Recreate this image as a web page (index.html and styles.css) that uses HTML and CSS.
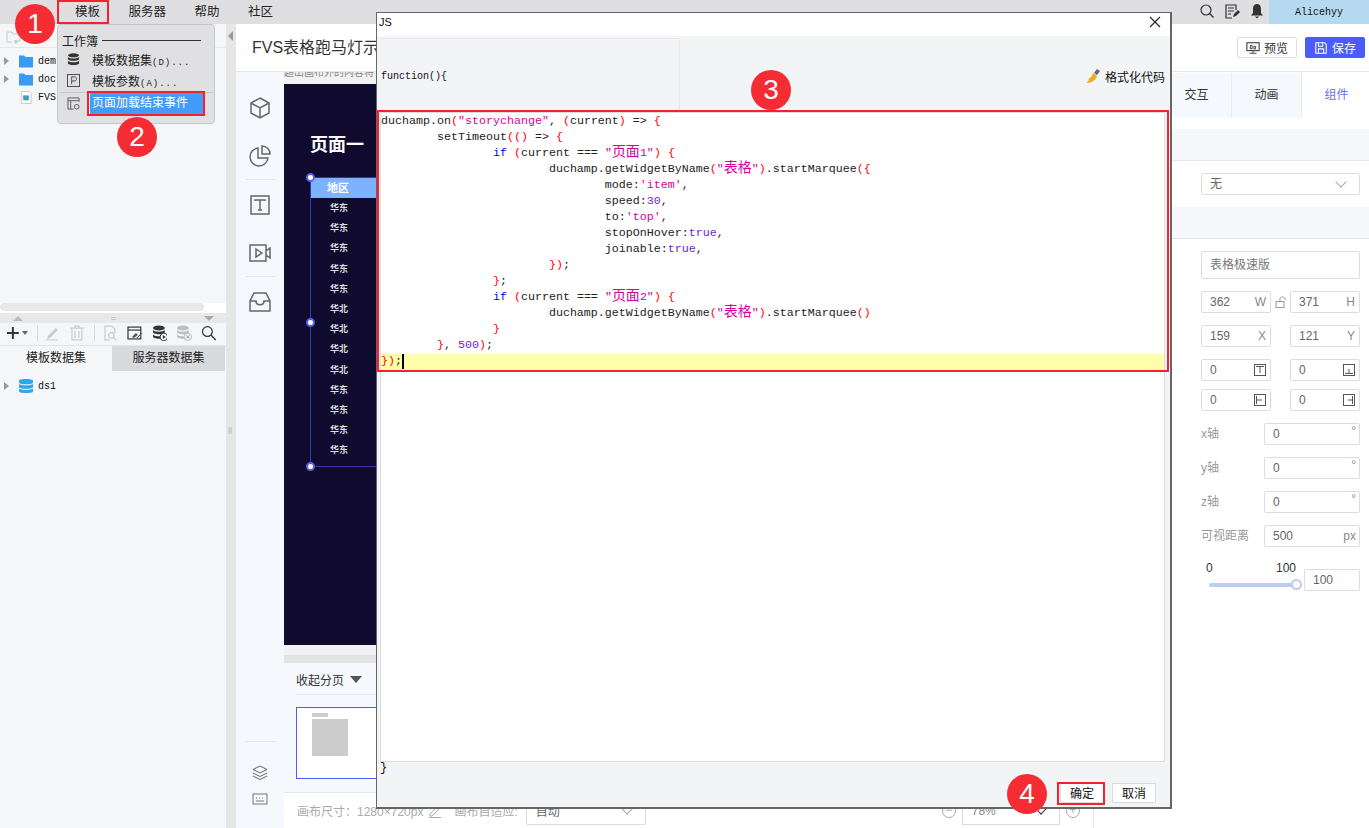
FILE: index.html
```html
<!DOCTYPE html>
<html lang="zh-CN">
<head>
    <meta charset="UTF-8">
    <title>FVS表格跑马灯示例</title>
    <link rel="stylesheet" href="styles.css">
</head>
<body>
    <div class="topbar">
        <div class="top-menu">
            <span class="top-item">模板</span>
            <span class="top-item">服务器</span>
            <span class="top-item">帮助</span>
            <span class="top-item">社区</span>
        </div>
        <div class="top-right">
            <svg class="top-icon" viewBox="0 0 16 16"><circle cx="7" cy="7" r="5" fill="none" stroke="#333" stroke-width="1.2"/><path d="M10.6 10.6L14.5 14.5" stroke="#333" stroke-width="1.4"/></svg>
            <svg class="top-icon" viewBox="0 0 16 16"><path d="M12 7V2H2v13h6" fill="none" stroke="#333" stroke-width="1.2"/><path d="M4 5h6M4 8h6M4 11h3" stroke="#333"/><path d="M9 14l1-3 4-4 2 2-4 4z" fill="#333"/></svg>
            <svg class="top-icon" viewBox="0 0 16 16"><path d="M8 1c-3 0-4 2.500-4 5v4l-2 2.500h12L12 10V6c0-2.500-1-5-4-5z" fill="#333"/><path d="M6 13.500h4L8 15.500z" fill="#333"/></svg>
            <div class="user-box sim">Alicehyy</div>
        </div>
    </div>

    <div class="workspace">
        <div class="left-panel">
            <div class="file-tools">
                <svg class="small-icon" viewBox="0 0 16 16"><path d="M1 3h5l1 2h7v7H8M1 3v10h5" fill="none" stroke="#c4c6ca"/><path d="M10 11v4M8 13h4" stroke="#c4c6ca"/></svg>
            </div>
            <div class="file-tree">
                <div class="tree-row"><span class="tree-arrow"></span><svg class="tree-icon" viewBox="0 0 14 12"><path d="M0 0h5l1.500 1.500H14V12H0z" fill="#3a9bf5"/></svg><span class="sim">dem</span></div>
                <div class="tree-row"><span class="tree-arrow"></span><svg class="tree-icon" viewBox="0 0 14 12"><path d="M0 0h5l1.500 1.500H14V12H0z" fill="#3a9bf5"/></svg><span class="sim">doc</span></div>
                <div class="tree-row"><span class="tree-arrow hidden"></span><svg class="tree-icon" viewBox="0 0 14 14"><path d="M2 .5h8l2.500 2.500v10.500H2z" fill="#fff" stroke="#c8c8c8"/><rect x="4" y="5" width="6" height="5" fill="#4c9f8d"/><rect x="4" y="5" width="6" height="2" fill="#3a9bf5"/></svg><span class="sim">FVS</span></div>
            </div>
            <div class="hscroll"><div class="hscroll-thumb"></div></div>
            <div class="split-bar">
                <span class="tri-up"></span>
                <span class="grip">=</span>
                <span class="tri-down"></span>
            </div>
            <div class="data-tools">
                <svg class="plus-icon" viewBox="0 0 16 16"><path d="M8 2v12M2 8h12" stroke="#333" stroke-width="2"/></svg>
                <span class="caret"></span>
                <span class="tool-sep"></span>
                <svg class="tool-icon" viewBox="0 0 16 16"><path d="M3 11l8-8 2 2-8 8-3 1z" fill="#c9cacc"/><path d="M1 15h12" stroke="#c9cacc"/></svg>
                <svg class="tool-icon" viewBox="0 0 16 16"><path d="M3 4v11h10V4M1 3h14M6 3V1h4v2M6 6v7M10 6v7" fill="none" stroke="#c9cacc" stroke-width="1.200"/></svg>
                <span class="tool-sep"></span>
                <svg class="tool-icon" viewBox="0 0 16 16"><path d="M8 15H3V1h7l3 3v4" fill="none" stroke="#c9cacc" stroke-width="1.200"/><circle cx="9.500" cy="10.500" r="2.800" fill="none" stroke="#c9cacc" stroke-width="1.200"/><path d="M11.500 12.500l3 3" stroke="#c9cacc" stroke-width="1.200"/></svg>
                <svg class="tool-icon" viewBox="0 0 16 16"><rect x="1" y="2" width="13" height="12" fill="none" stroke="#333" stroke-width="1.200"/><path d="M1 5h13" stroke="#333" stroke-width="1.200"/><path d="M5 12l4-4 2 2-4 3z" fill="#555"/><path d="M10 13l5-5" stroke="#333"/></svg>
                <svg class="tool-icon" viewBox="0 0 16 16"><ellipse cx="7" cy="3" rx="6" ry="2.500" fill="#333"/><path d="M1 4.500c0 3 12 3 12 0V7c0 3-12 3-12 0zM1 9c0 3 12 3 12 0v2.500c0 3-12 3-12 0z" fill="#333"/><circle cx="12" cy="12" r="3.800" fill="#fff" stroke="#333"/><path d="M11 10v4l3-2z" fill="#333"/></svg>
                <svg class="tool-icon" viewBox="0 0 16 16"><ellipse cx="7" cy="3" rx="6" ry="2.500" fill="#bdbec0"/><path d="M1 4.500c0 3 12 3 12 0V7c0 3-12 3-12 0zM1 9c0 3 12 3 12 0v2.500c0 3-12 3-12 0z" fill="#bdbec0"/><circle cx="12" cy="12" r="3.800" fill="#f0f0f0" stroke="#bdbec0"/><path d="M10.500 10.500l3 3M13.500 10.500l-3 3" stroke="#999"/></svg>
                <svg class="tool-icon" viewBox="0 0 16 16"><circle cx="6.500" cy="6.500" r="5" fill="none" stroke="#333" stroke-width="1.200"/><path d="M10 10l5 5" stroke="#333" stroke-width="1.400"/></svg>
            </div>
            <div class="data-tabs">
                <div class="data-tab">模板数据集</div>
                <div class="data-tab data-tab-off">服务器数据集</div>
            </div>
            <div class="tree-row ds-row">
                <span class="tree-arrow"></span>
                <svg class="tree-icon db-icon" viewBox="0 0 14 16"><path d="M0 2.500C0 .5 14 .5 14 2.500v11c0 2-14 2-14 0z" fill="#2ea6ea"/><path d="M0 5.500c2 1.800 12 1.800 14 0M0 10c2 1.800 12 1.800 14 0" fill="none" stroke="#fff"/></svg>
                <span class="sim">ds1</span>
            </div>
        </div>

        <div class="splitter">
            <span class="collapse-tri"></span>
            <span class="split-grip">||</span>
        </div>

        <div class="center">
            <div class="center-head">FVS表格跑马灯示</div>
            <div class="center-body">
                <div class="side-tools">
                    <svg class="side-icon" viewBox="0 0 24 24"><path d="M12 2l9 5v10l-9 5-9-5V7zM3 7l9 5 9-5M12 12v10" fill="none" stroke="#666" stroke-width="1.500"/></svg>
                    <svg class="side-icon" viewBox="0 0 24 24"><path d="M10 4a9 9 0 1 0 10 10H10z" fill="none" stroke="#666" stroke-width="1.500"/><path d="M14 2a8 8 0 0 1 8 8h-8z" fill="none" stroke="#666" stroke-width="1.500"/></svg>
                    <div class="side-sep"></div>
                    <svg class="side-icon" viewBox="0 0 24 24"><path d="M3 6V3h18v3M3 18v3h18v-3M3 6v12M21 6v12" fill="none" stroke="#666" stroke-width="1.500"/><path d="M7 8V7h10v1M12 7v10M10 17h4" fill="none" stroke="#666" stroke-width="1.500"/></svg>
                    <svg class="side-icon" viewBox="0 0 24 24"><path d="M2 4h16v16H2zM18 10l4-3v10l-4-3" fill="none" stroke="#666" stroke-width="1.500"/><path d="M8 8l6 4-6 4z" fill="none" stroke="#666" stroke-width="1.500"/></svg>
                    <div class="side-sep"></div>
                    <svg class="side-icon" viewBox="0 0 24 24"><path d="M6 3h12l4 8v10H2V11zM2 11h6c0 5 8 5 8 0h6" fill="none" stroke="#666" stroke-width="1.500"/></svg>
                    <div class="side-spacer"></div>
                    <div class="side-sep"></div>
                    <svg class="side-small" viewBox="0 0 16 16"><path d="M8 1l7 3.500-7 3.500-7-3.500zM1 8l7 3.500L15 8M1 11l7 3.500 7-3.500" fill="none" stroke="#666"/></svg>
                    <svg class="side-small" viewBox="0 0 16 16"><rect x="1" y="3" width="14" height="10" fill="none" stroke="#777"/><path d="M4 7h1M7 7h1M10 7h1M4 10h8" stroke="#777"/></svg>
                </div>
                <div class="stage">
                    <div class="stage-note">超出画布外的内容将</div>
                    <div class="canvas">
                        <div class="page-title">页面一</div>
                        <div class="marquee-table">
                            <div class="table-head">地区</div>
                            <div class="table-cell">华东</div>
                            <div class="table-cell">华东</div>
                            <div class="table-cell">华东</div>
                            <div class="table-cell">华东</div>
                            <div class="table-cell">华东</div>
                            <div class="table-cell">华北</div>
                            <div class="table-cell">华北</div>
                            <div class="table-cell">华北</div>
                            <div class="table-cell">华北</div>
                            <div class="table-cell">华东</div>
                            <div class="table-cell">华东</div>
                            <div class="table-cell">华东</div>
                            <div class="table-cell">华东</div>
                            <span class="handle handle-top"></span>
                            <span class="handle handle-mid"></span>
                            <span class="handle handle-bottom"></span>
                        </div>
                    </div>
                    <div class="stage-gap"></div>
                    <div class="stage-scroll"></div>
                    <div class="pager">
                        <div class="pager-head">收起分页 <span class="pager-caret"></span></div>
                        <div class="thumb">
                            <div class="thumb-title"></div>
                            <div class="thumb-block"></div>
                        </div>
                    </div>
                    <div class="status-bar">
                        <span>画布尺寸：1280×720px</span>
                        <svg class="status-pen" viewBox="0 0 14 14"><path d="M2 10l7-7 2 2-7 7H2zM1 13.500h12" fill="none" stroke="#aaa"/></svg>
                        <span class="status-label">画布自适应:</span>
                        <div class="status-select"><span>自动</span><span class="chevron"></span></div>
                        <span class="status-minus">−</span>
                        <div class="zoom-select"><span>78%</span><span class="chevron chevron-dark"></span></div>
                        <span class="status-minus">+</span>
                        <span class="status-line"></span>
                    </div>
                </div>
            </div>
        </div>

        <div class="right-panel">
            <div class="right-head">
                <button class="btn-preview"><svg class="btn-icon" viewBox="0 0 16 16"><rect x="1" y="2" width="14" height="9" fill="none" stroke="#333" stroke-width="1.200"/><path d="M8 11v3M4 14h8M5 5h2v4H5zM9 6h2v3H9z" stroke="#333" fill="none"/></svg>预览</button>
                <button class="btn-save"><svg class="btn-icon" viewBox="0 0 16 16"><path d="M2 2h10l2 2v10H2zM5 2v4h5V2M5 14v-5h6v5" fill="none" stroke="#fff" stroke-width="1.200"/></svg>保存</button>
            </div>
            <div class="right-tabs">
                <div class="right-tab">交互</div>
                <div class="right-tab">动画</div>
                <div class="right-tab right-tab-on">组件</div>
            </div>
            <div class="band band-first"></div>
            <div class="select-box"><span class="select-text">无</span><span class="chevron"></span></div>
            <div class="band"></div>
            <div class="name-input">表格极速版</div>
            <div class="field-row field-row-first">
                <div class="field"><span>362</span><span class="unit">W</span></div>
                <svg class="lock" viewBox="0 0 12 12"><rect x="1" y="5.500" width="8" height="6" fill="none" stroke="#999"/><path d="M5 5V2.500c0-2 5-2 5 0V4" fill="none" stroke="#999"/></svg>
                <div class="field"><span>371</span><span class="unit">H</span></div>
            </div>
            <div class="field-row">
                <div class="field"><span>159</span><span class="unit">X</span></div>
                <div class="field"><span>121</span><span class="unit">Y</span></div>
            </div>
            <div class="field-row">
                <div class="field"><span>0</span><svg class="edge" viewBox="0 0 12 12"><rect x=".5" y=".5" width="11" height="11" fill="none" stroke="#555"/><path d="M2 2.500h8M6 2.500V9" stroke="#555"/></svg></div>
                <div class="field"><span>0</span><svg class="edge" viewBox="0 0 12 12"><rect x=".5" y=".5" width="11" height="11" fill="none" stroke="#555"/><path d="M2 9.500h8M6 9.500V5" stroke="#555"/></svg></div>
            </div>
            <div class="field-row field-row-tight">
                <div class="field"><span>0</span><svg class="edge" viewBox="0 0 12 12"><rect x=".5" y=".5" width="11" height="11" fill="none" stroke="#555"/><path d="M2.500 2v8M2.500 6H8" stroke="#555"/></svg></div>
                <div class="field"><span>0</span><svg class="edge" viewBox="0 0 12 12"><rect x=".5" y=".5" width="11" height="11" fill="none" stroke="#555"/><path d="M9.500 2v8M9.500 6H5" stroke="#555"/></svg></div>
            </div>
            <div class="axis-row"><span class="axis-label">x轴</span><div class="axis-field"><span>0</span><span class="deg">°</span></div></div>
            <div class="axis-row"><span class="axis-label">y轴</span><div class="axis-field"><span>0</span><span class="deg">°</span></div></div>
            <div class="axis-row"><span class="axis-label">z轴</span><div class="axis-field"><span>0</span><span class="deg">°</span></div></div>
            <div class="axis-row"><span class="axis-label">可视距离</span><div class="axis-field"><span>500</span><span class="unit">px</span></div></div>
            <div class="slider-row">
                <div class="slider">
                    <div class="slider-labels"><span>0</span><span>100</span></div>
                    <div class="slider-track"><span class="slider-knob"></span></div>
                </div>
                <div class="slider-input">100</div>
            </div>
        </div>
    </div>

    <!-- template menu -->
    <div class="menu">
        <div class="menu-label"><span>工作簿</span><span class="menu-rule"></span></div>
        <div class="menu-row">
            <svg class="menu-icon" viewBox="0 0 14 14"><ellipse cx="7" cy="2.500" rx="6" ry="2.200" fill="#333"/><path d="M1 4c0 2.500 12 2.500 12 0v2.500c0 2.500-12 2.500-12 0zM1 8.200c0 2.500 12 2.500 12 0v2.800c0 2.500-12 2.500-12 0z" fill="#333"/></svg>
            <span>模板数据集<span class="menu-key">(D)...</span></span>
        </div>
        <div class="menu-row">
            <svg class="menu-icon" viewBox="0 0 14 14"><rect x=".5" y=".5" width="13" height="13" fill="none" stroke="#444"/><path d="M5 11V3h3c3 0 3 4.500 0 4.500H5" fill="none" stroke="#444"/></svg>
            <span>模板参数<span class="menu-key">(A)...</span></span>
        </div>
        <div class="menu-sep"></div>
        <div class="menu-row menu-row-on">
            <svg class="menu-icon" viewBox="0 0 14 14"><path d="M13 5V1H1v12h6M1 4h12M4 4v9" fill="none" stroke="#555"/><circle cx="10.500" cy="10.500" r="2.500" fill="none" stroke="#555"/></svg>
            <span class="menu-active">页面加载结束事件</span>
        </div>
    </div>

    <!-- JS editor dialog -->
    <div class="dialog">
        <div class="dialog-title">
            <span>JS</span>
            <svg class="dialog-close" viewBox="0 0 12 12"><path d="M1 1l10 10M11 1L1 11" stroke="#222" stroke-width="1.100"/></svg>
        </div>
        <div class="dialog-head">
            <div class="func-cell sim">function(){</div>
            <div class="format-btn">
                <svg class="broom" viewBox="0 0 16 16"><path d="M9 5l3-4 3 2-3 4z" fill="#666"/><path d="M8 5l4 3c-1 4-5 7-11 7 3-2 3-3 3-5 2 0 3-2 4-5z" fill="#f2a91e"/></svg>
                格式化代码
            </div>
        </div>
        <div class="editor">
            <div class="code-line">duchamp.on<b>(</b><i>"storychange"</i>, <b>(</b>current<b>)</b> => <b>{</b></div>
            <div class="code-line">	setTimeout<b>(()</b> => <b>{</b></div>
            <div class="code-line">		<u>if</u> <b>(</b>current === <i>"<span class="cjk">页面</span>1"</i><b>)</b> <b>{</b></div>
            <div class="code-line">			duchamp.getWidgetByName<b>(</b><i>"<span class="cjk">表格</span>"</i><b>)</b>.startMarquee<b>({</b></div>
            <div class="code-line">				mode:<i>'item'</i>,</div>
            <div class="code-line">				speed:<em>30</em>,</div>
            <div class="code-line">				to:<i>'top'</i>,</div>
            <div class="code-line">				stopOnHover:<em>true</em>,</div>
            <div class="code-line">				joinable:<em>true</em>,</div>
            <div class="code-line">			<b>})</b>;</div>
            <div class="code-line">		<b>}</b>;</div>
            <div class="code-line">		<u>if</u> <b>(</b>current === <i>"<span class="cjk">页面</span>2"</i><b>)</b> <b>{</b></div>
            <div class="code-line">			duchamp.getWidgetByName<b>(</b><i>"<span class="cjk">表格</span>"</i><b>)</b>.startMarquee<b>()</b></div>
            <div class="code-line">		<b>}</b></div>
            <div class="code-line">	<b>}</b>, <em>500</em><b>)</b>;</div>
            <div class="code-line code-line-on"><b>})</b>;<span class="text-caret"></span></div>
        </div>
        <div class="code-end">}</div>
        <div class="dialog-foot">
            <button class="btn-dialog">确定</button>
            <button class="btn-dialog">取消</button>
        </div>
    </div>

    <!-- tutorial marks on top of the screenshot -->
    <div class="mark mark-menu"></div>
    <div class="mark mark-item"></div>
    <div class="mark mark-code"></div>
    <div class="mark mark-ok"></div>
    <div class="step step-1">1</div>
    <div class="step step-2">2</div>
    <div class="step step-3">3</div>
    <div class="step step-4">4</div>
</body>
</html>
```

FILE: styles.css
```css
* {
    margin: 0;
    padding: 0;
    box-sizing: border-box;
}

body {
    width: 1369px;
    height: 828px;
    overflow: hidden;
    position: relative;
    font-family: "Liberation Sans", "Noto Sans CJK SC", sans-serif;
    font-size: 12px;
    color: #333;
    background: #fff;
}

.sim {
    font-family: "Liberation Mono", "Noto Sans CJK SC", monospace;
    font-size: 10px;
    color: #111;
}

/* top bar */
.topbar {
    height: 24px;
    background: #dfdfe1;
    display: flex;
    justify-content: space-between;
}

.top-menu {
    display: flex;
    padding: 0 0 3px 75px;
    gap: 28.5px;
    align-items: center;
    color: #222;
    font-size: 12.5px;
}

.top-right {
    display: flex;
    align-items: center;
}

.top-icon {
    width: 16px;
    height: 16px;
    margin: -2px 9px 0 0;
}

.top-icon:nth-child(3) {
    margin-right: 4px;
}

.user-box {
    width: 100px;
    height: 24px;
    background: #b5d9f0;
    text-align: center;
    line-height: 25px;
}

.workspace {
    display: flex;
    height: 804px;
}

/* left panel */
.left-panel {
    width: 226px;
    background: #f5f6f8;
}

.file-tools {
    height: 24px;
    padding: 5px 6px;
    border-bottom: 1px solid #e6e7ea;
}

.small-icon {
    width: 16px;
    height: 16px;
    display: block;
}

.file-tree {
    height: 254px;
    padding-top: 4px;
}

.tree-row {
    height: 18px;
    display: flex;
    align-items: center;
    white-space: nowrap;
    overflow: hidden;
}

.tree-arrow {
    width: 0;
    height: 0;
    margin: 0 10px 0 4px;
    border-left: 5px solid #999;
    border-top: 4px solid transparent;
    border-bottom: 4px solid transparent;
}

.hidden {
    visibility: hidden;
}

.tree-icon {
    width: 14px;
    height: 13px;
    margin-right: 5px;
}

.db-icon {
    height: 16px;
}

.hscroll {
    height: 10px;
    background: #fff;
}

.hscroll-thumb {
    width: 204px;
    height: 8px;
    margin-top: 1px;
    background: #e8e8e8;
    border-radius: 4px;
}

.split-bar {
    height: 10px;
    background: #e8e8e8;
    display: flex;
    justify-content: space-between;
    align-items: center;
    padding: 0 12px 0 13px;
    color: #aaa;
    font-size: 9px;
}

.tri-up,
.tri-down {
    width: 0;
    height: 0;
    border-left: 5px solid transparent;
    border-right: 5px solid transparent;
}

.tri-up {
    border-bottom: 5px solid #bbb;
}

.tri-down {
    border-top: 5px solid #aaa;
}

.data-tools {
    height: 23px;
    display: flex;
    align-items: center;
    padding: 0 0 2px 5px;
    border-bottom: 1px solid #e3e4e6;
}

.plus-icon {
    width: 16px;
    height: 16px;
}

.caret {
    width: 0;
    height: 0;
    margin: 0 9px 0 1px;
    border-left: 3px solid transparent;
    border-right: 3px solid transparent;
    border-top: 4px solid #666;
}

.tool-sep {
    width: 1px;
    height: 16px;
    background: #d8d8d8;
    margin-right: 7px;
}

.tool-icon {
    width: 16px;
    height: 16px;
    margin-right: 9px;
}

.data-tabs {
    display: flex;
    height: 25px;
}

.data-tab {
    width: 112px;
    line-height: 25px;
    text-align: center;
    color: #222;
}

.data-tab-off {
    width: 113px;
    background: #d9dadd;
}

.ds-row {
    height: 18px;
    margin-top: 6px;
}

/* splitter */
.splitter {
    width: 10px;
    background: #e6e6e6;
    position: relative;
}

.collapse-tri {
    position: absolute;
    left: 2px;
    top: 7px;
    width: 0;
    height: 0;
    border-right: 5px solid #999;
    border-top: 5px solid transparent;
    border-bottom: 5px solid transparent;
}

.split-grip {
    position: absolute;
    left: 2px;
    top: 401px;
    color: #aaa;
    font-size: 8px;
}

/* center */
.center {
    flex: 1;
    display: flex;
    flex-direction: column;
    min-width: 0;
}

.center-head {
    height: 48px;
    padding-left: 16px;
    font-size: 16px;
    line-height: 47px;
    color: #333;
    border-bottom: 1px solid #e4e7ec;
}

.center-body {
    flex: 1;
    display: flex;
    min-height: 0;
}

.side-tools {
    width: 48px;
    background: #f5f9fd;
    display: flex;
    flex-direction: column;
    align-items: center;
    padding: 24px 0 21px;
}

.side-icon {
    width: 24px;
    height: 24px;
    margin-bottom: 24px;
}

.side-sep {
    width: 31px;
    height: 1px;
    background: #e4e7ea;
    margin: -13px 0 13px;
    flex: none;
}

.side-spacer {
    flex: 1;
}

.side-small {
    width: 16px;
    height: 16px;
    margin-top: 10px;
    flex: none;
}

.stage {
    flex: 1;
    display: flex;
    flex-direction: column;
    min-width: 0;
}

.stage-note {
    height: 12px;
    background: #f0f1f3;
    color: #888;
    font-size: 10px;
    line-height: 2px;
    overflow: hidden;
}

.canvas {
    height: 561px;
    background: #0f0a2e;
    padding: 50px 0 0 26px;
    color: #fff;
}

.page-title {
    height: 43px;
    font-size: 18px;
    font-weight: bold;
    line-height: 22px;
}

.marquee-table {
    position: relative;
    width: 362px;
    height: 290px;
    border-left: 1px solid #3238a8;
    border-bottom: 1px solid #3238a8;
    border-top: 1px solid #3238a8;
}

.table-head {
    height: 20px;
    background: #7fb2fd;
    font-size: 11px;
    font-weight: bold;
    line-height: 20px;
    padding-left: 16px;
}

.table-cell {
    height: 20.2px;
    font-size: 9px;
    font-weight: bold;
    line-height: 20px;
    padding-left: 19px;
    color: #ddd;
}

.handle {
    position: absolute;
    left: -5px;
    width: 9px;
    height: 9px;
    border-radius: 50%;
    background: #fff;
    border: 2px solid #5560f0;
}

.handle-top {
    top: -5px;
}

.handle-mid {
    top: 140px;
}

.handle-bottom {
    bottom: -5px;
}

.stage-gap {
    height: 10px;
    background: #eff1f5;
}

.stage-scroll {
    height: 8px;
    background: #e3e3e3;
}

.pager {
    height: 129px;
    background: #f5f9fd;
    padding: 0 12px;
}

.pager-head {
    height: 32px;
    padding-top: 1px;
    border-bottom: 1px solid #e4e7ea;
    display: flex;
    align-items: center;
    gap: 6px;
}

.pager-caret {
    width: 0;
    height: 0;
    border-left: 6px solid transparent;
    border-right: 6px solid transparent;
    border-top: 7px solid #555;
}

.thumb {
    width: 130px;
    height: 72px;
    margin-top: 12px;
    background: #fff;
    border: 1px solid #4a5cf5;
    padding: 5px 15px;
}

.thumb-title {
    width: 16px;
    height: 4px;
    background: #ccc;
    margin-bottom: 2px;
}

.thumb-block {
    width: 36px;
    height: 37px;
    background: #ccc;
}

.status-bar {
    height: 36px;
    padding-left: 13px;
    background: #fff;
    border-top: 1px solid #e4e7ea;
    display: flex;
    align-items: center;
    color: #aaa;
    white-space: nowrap;
}

.status-pen {
    width: 14px;
    height: 14px;
    margin-left: 5px;
}

.status-label {
    margin-left: 12px;
}

.status-select {
    width: 120px;
    height: 28px;
    margin-left: 8px;
    padding: 0 9px;
    border: 1px solid #ddd;
    display: flex;
    justify-content: space-between;
    align-items: center;
    color: #666;
    border-radius: 2px;
}

.chevron {
    width: 8px;
    height: 8px;
    margin: -4px 5px 0 0;
    border-right: 1px solid #aaa;
    border-bottom: 1px solid #aaa;
    transform: rotate(45deg);
}

.chevron-dark {
    border-color: #333;
}

.status-minus {
    width: 14px;
    height: 14px;
    border: 1px solid #aaa;
    border-radius: 50%;
    text-align: center;
    line-height: 11px;
    margin-left: 296px;
}

.zoom-select {
    width: 98px;
    height: 28px;
    margin-left: 6px;
    padding: 0 9px;
    border: 1px solid #ddd;
    display: flex;
    justify-content: space-between;
    align-items: center;
    color: #888;
}

.zoom-select + .status-minus {
    margin-left: 6px;
}

.status-line {
    width: 1px;
    height: 36px;
    background: #e8e8e8;
    margin-left: 13px;
}

/* right panel */
.right-panel {
    width: 198px;
    background: #fff;
}

.right-head {
    height: 48px;
    padding: 13px 4px 0 66px;
    display: flex;
    gap: 8px;
    border-bottom: 1px solid #e4e7ec;
}

.btn-preview,
.btn-save {
    width: 60px;
    height: 21px;
    font: inherit;
    border: 1px solid #ddd;
    background: #fff;
    color: #333;
    border-radius: 2px;
    display: flex;
    align-items: center;
    justify-content: center;
    gap: 4px;
}

.btn-save {
    background: #4a5cfb;
    border-color: #4a5cfb;
    color: #fff;
}

.btn-icon {
    width: 14px;
    height: 14px;
}

.right-tabs {
    display: flex;
    height: 45px;
    margin-top: 1px;
    padding-left: 1px;
}

.right-tab {
    width: 70px;
    line-height: 44px;
    text-align: center;
    background: #f5f9fd;
    border-right: 1px solid #e8edf2;
}

.right-tab:first-child {
    width: 60px;
    padding-right: 10px;
}

.right-tab-on {
    width: 67px;
    padding-left: 2px;
    background: #fff;
    border: 0;
    color: #6a6cf5;
}

.band {
    height: 32px;
    background: #f5f7fb;
    border-bottom: 1px solid #e4e7ec;
    margin-top: 12px;
}

.band-first {
    margin-top: 11px;
}

.select-box {
    width: 159px;
    height: 22px;
    margin: 12px 0 0 30px;
    padding: 0 9px 0 8px;
    border: 1px solid #ddd;
    border-radius: 2px;
    display: flex;
    justify-content: space-between;
    align-items: center;
    color: #666;
}

.select-text {
    margin-top: -3px;
}

.name-input {
    width: 159px;
    height: 28px;
    margin: 12px 0 0 30px;
    padding: 0 8px;
    border: 1px solid #ddd;
    border-radius: 2px;
    line-height: 26px;
    color: #777;
}

.field-row {
    display: flex;
    justify-content: space-between;
    align-items: center;
    width: 159px;
    height: 22px;
    margin: 12px 0 0 30px;
}

.field-row-tight {
    margin-top: 8px;
}

.field {
    width: 70px;
    height: 22px;
    padding: 0 4px 0 8px;
    border: 1px solid #ddd;
    border-radius: 2px;
    display: flex;
    justify-content: space-between;
    align-items: center;
    color: #666;
}

.unit {
    color: #888;
}

.lock {
    width: 12px;
    height: 12px;
}

.edge {
    width: 12px;
    height: 12px;
}

.axis-row {
    display: flex;
    justify-content: space-between;
    align-items: center;
    width: 159px;
    height: 22px;
    margin: 12px 0 0 30px;
}

.axis-label {
    margin-top: -4px;
    color: #999;
}

.axis-field {
    width: 96px;
    height: 22px;
    padding: 0 3px 0 8px;
    border: 1px solid #ddd;
    border-radius: 2px;
    display: flex;
    justify-content: space-between;
    align-items: center;
    color: #666;
}

.deg {
    align-self: flex-start;
    color: #888;
    line-height: 14px;
}

.slider-row {
    display: flex;
    justify-content: space-between;
    align-items: flex-end;
    width: 159px;
    margin: 14px 0 0 30px;
}

.slider {
    width: 97px;
    padding: 0 4px 0 5px;
}

.slider-labels {
    display: flex;
    justify-content: space-between;
    line-height: 14px;
    margin: 0 -2px 8px 0;
    color: #333;
}

.slider-track {
    position: relative;
    height: 4px;
    margin: 0 -3px 4px 3px;
    background: #bccafa;
    border-radius: 2px;
}

.slider-knob {
    position: absolute;
    right: -5px;
    top: -4px;
    width: 11px;
    height: 11px;
    border-radius: 50%;
    background: #fff;
    border: 2px solid #bccafa;
}

.slider-input {
    width: 56px;
    height: 22px;
    padding-left: 8px;
    border: 1px solid #ddd;
    border-radius: 2px;
    line-height: 20px;
    color: #666;
}

/* template menu */
.menu {
    position: absolute;
    left: 57px;
    top: 24px;
    width: 158px;
    height: 100px;
    padding-top: 8px;
    background: #e0e0e2;
    border: 1px solid #c8c8ca;
    border-radius: 4px;
    color: #222;
}

.menu-label {
    display: flex;
    align-items: center;
    height: 14px;
    padding-left: 4px;
    gap: 4px;
}

.menu-rule {
    width: 99px;
    height: 1px;
    background: #333;
    margin-top: 1px;
}

.menu-row {
    height: 21px;
    display: flex;
    align-items: center;
    padding-left: 9px;
    gap: 12px;
    white-space: nowrap;
}

.menu-row:nth-child(2) {
    margin-top: 2px;
}

.menu-key {
    font-family: "Liberation Mono", monospace;
    font-size: 9px;
    letter-spacing: 1px;
}

.menu-icon {
    width: 13px;
    height: 13px;
}

.menu-sep {
    height: 1px;
    background: #c8c8ca;
    margin: 1px 0 0 2px;
}

.menu-row-on {
    gap: 10px;
}

.menu-active {
    width: 113px;
    height: 21px;
    padding-left: 2px;
    line-height: 20px;
    background: #429dfa;
    color: #fff;
}

/* dialog */
.dialog {
    position: absolute;
    left: 376px;
    top: 12px;
    width: 796px;
    height: 797px;
    background: #f3f4f6;
    border: 1px solid #666;
    border-bottom-width: 2px;
    border-right-width: 2px;
    display: flex;
    flex-direction: column;
    color: #111;
}

.dialog-title {
    height: 23px;
    flex: none;
    padding: 0 9px 6px 2px;
    background: #fff;
    display: flex;
    justify-content: space-between;
    align-items: center;
    font-size: 11px;
}

.dialog-close {
    width: 12px;
    height: 12px;
}

.dialog-head {
    height: 74px;
    flex: none;
    display: flex;
    justify-content: space-between;
    align-items: center;
    padding-right: 5px;
}

.func-cell {
    width: 300px;
    height: 72px;
    margin: 2px 0 0 3px;
    padding-left: 1px;
    line-height: 76px;
    border: 1px solid #e8e8ea;
    border-width: 1px 1px 0 1px;
    border-left: 0;
}

.format-btn {
    display: flex;
    align-items: center;
    gap: 4px;
    margin-top: 6px;
}

.broom {
    width: 16px;
    height: 16px;
}

.editor {
    flex: none;
    height: 650px;
    margin: 2px 5px 0 3px;
    padding-top: 1px;
    background: #fff;
    border: 1px solid #dcdcde;
    font-family: "Liberation Mono", "Noto Sans CJK SC", monospace;
    font-size: 11.67px;
    color: #222;
}

.code-line {
    height: 16px;
    line-height: 14px;
    white-space: pre;
    tab-size: 8;
}

.code-line-on {
    background: #ffffaa;
}

.code-line b {
    font-weight: normal;
    color: #f00;
}

.code-line i {
    font-style: normal;
    color: #d6009e;
}

.code-line u {
    text-decoration: none;
    color: #00f;
}

.code-line em {
    font-style: normal;
    color: #6a1fd0;
}

.cjk {
    font-size: 14px;
    line-height: 0;
}

.text-caret {
    display: inline-block;
    width: 2px;
    height: 15px;
    background: #000;
    vertical-align: top;
}

.code-end {
    height: 14px;
    flex: none;
    padding-left: 3px;
    font-family: "Liberation Mono", monospace;
    font-size: 12px;
    line-height: 12px;
}

.dialog-foot {
    flex: 1;
    display: flex;
    justify-content: flex-end;
    align-items: flex-start;
    gap: 8px;
    padding: 7px 14px 0 0;
}

.btn-dialog {
    width: 44px;
    height: 20px;
    padding-bottom: 2px;
    font: inherit;
    background: #fff;
    border: 1px solid #dcdcdc;
    color: #111;
}

/* tutorial marks */
.mark {
    position: absolute;
    border: 2px solid #f5222d;
}

.mark-menu {
    left: 57px;
    top: 0;
    width: 52px;
    height: 24px;
}

.mark-item {
    left: 87px;
    top: 91px;
    width: 118px;
    height: 25px;
}

.mark-code {
    left: 377px;
    top: 110px;
    width: 792px;
    height: 262px;
}

.mark-ok {
    left: 1057px;
    top: 782px;
    width: 48px;
    height: 23px;
}

.step {
    position: absolute;
    width: 40px;
    height: 40px;
    border-radius: 50%;
    background: #f52c33;
    color: #fff;
    font-size: 28px;
    line-height: 40px;
    text-align: center;
}

.step-1 {
    left: 15px;
    top: 4px;
}

.step-2 {
    left: 117px;
    top: 117px;
}

.step-3 {
    left: 751px;
    top: 70px;
}

.step-4 {
    left: 1007px;
    top: 774px;
}
```
